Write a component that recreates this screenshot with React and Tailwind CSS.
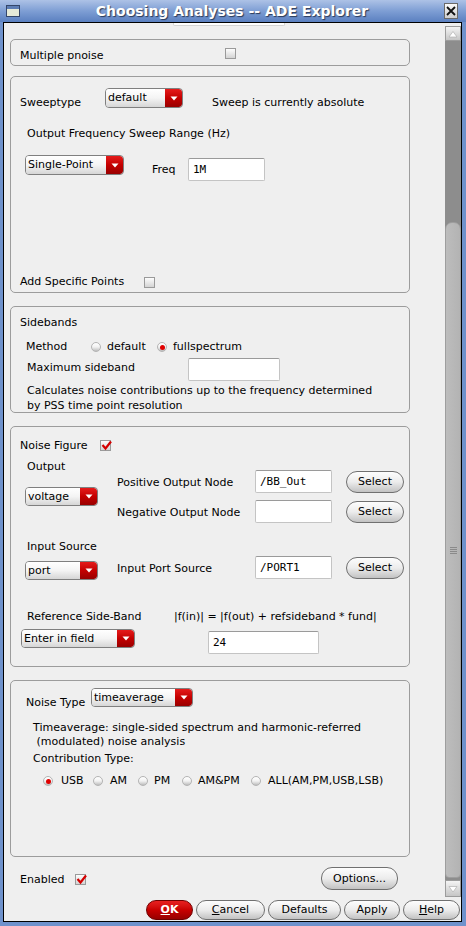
import React from "react"

function Check({ on, className = "" }) {
    return (
        <span className={`relative inline-flex h-[11px] w-[11px] shrink-0 border border-[#9a9a9a] bg-linear-to-b from-[#fdfdfd] to-[#d4d4d4] ${className}`}>
            {on && (
                <svg className="absolute left-[0px] top-[-1px]" width="11" height="11" viewBox="0 0 11 11">
                    <path d="M1.5 5 L4.5 8.5 L10 1.5" stroke="#d40000" strokeWidth="2.2" fill="none" />
                </svg>
            )}
        </span>
    )
}

function Radio({ on }) {
    return (
        <span className="inline-flex h-[10px] w-[10px] shrink-0 items-center justify-center rounded-full border border-[#b4b4b4] bg-linear-to-b from-[#ffffff] via-[#f2f2f2] to-[#bdbdbd]">
            {on && <span className="h-[5px] w-[5px] rounded-full bg-[#e00000]" />}
        </span>
    )
}

function Combo({ w, h, label, className = "" }) {
    return (
        <div className={`flex shrink-0 overflow-hidden rounded-[4px] border border-[#7f7f7f] ${w} ${h} ${className}`}>
            <div className="flex flex-1 items-center bg-linear-to-b from-[#ffffff] via-[#f4f4f4] to-[#d6d6d6] pl-[2px]">{label}</div>
            <div className="flex w-[17px] items-center justify-center rounded-r-[3px] bg-linear-to-b from-[#e51a1a] via-[#c40000] to-[#990000]">
                <svg width="8" height="5" viewBox="0 0 8 5">
                    <path d="M0.5 0.5 L7.5 0.5 L4 4.5 z" fill="#ffffff" />
                </svg>
            </div>
        </div>
    )
}

function Field({ w, value, className = "" }) {
    return (
        <div className={`flex h-[23px] shrink-0 items-center rounded-[2px] border border-[#c4c4c4] border-t-[#9a9a9a] bg-white pl-[4px] font-['DejaVu_Sans_Mono',monospace] ${w} ${className}`}>
            {value}
        </div>
    )
}

function Btn({ w, h = "h-[22px]", children, className = "" }) {
    return (
        <div className={`flex shrink-0 items-center justify-center rounded-[11px] border border-[#707070] bg-linear-to-b from-[#fdfdfd] via-[#ececec] to-[#c2c2c2] ${w} ${h} ${className}`}>
            {children}
        </div>
    )
}

function TitleBar() {
    return (
        <div className="flex h-[22px] items-center bg-linear-to-b from-[#adc2e6] via-[#7e9ed4] to-[#5b80c0]">
            <div className="ml-[6px] flex h-[12px] w-[14px] flex-col border border-[#34466a]">
                <div className="h-[3px] bg-[#5d7db4]" />
                <div className="flex-1 bg-[#e6ead8]" />
            </div>
            <div className="flex-1 text-center text-[14px] font-bold text-white [text-shadow:1px_1px_1px_#2b3a58]">
                Choosing Analyses -- ADE Explorer
            </div>
            <div className="mr-[8px] flex h-[16px] w-[14px] items-center justify-center border border-[#6a6a6a] bg-linear-to-b from-[#fafafa] to-[#cfcfcf]">
                <svg width="10" height="10" viewBox="0 0 10 10">
                    <path d="M1 1 L9 9 M9 1 L1 9" stroke="#111" strokeWidth="1.8" />
                </svg>
            </div>
        </div>
    )
}

function ScrollBar() {
    return (
        <div className="flex w-[16px] flex-col pt-[3px]">
            <div className="flex h-[15px] items-center justify-center border border-[#9c9c9c] bg-linear-to-b from-[#f4f4f4] to-[#c6c6c6]">
                <svg width="10" height="8" viewBox="0 0 10 8">
                    <path d="M1 7 L9 7 L5 1.5 z" fill="#ffffff" stroke="#a8a8a8" strokeWidth="0.6" />
                </svg>
            </div>
            <div className="flex-1 bg-[#8d8d8d] pt-[181px]">
                <div className="flex h-[656px] items-center justify-center rounded-t-[7px] rounded-b-[4px] border border-[#9e9e9e] bg-linear-to-r from-[#bdbdbd] to-[#b3b3b3]">
                    <div className="flex flex-col gap-[1px]">
                        <div className="h-[1px] w-[7px] bg-[#8a8a8a]" />
                        <div className="h-[1px] w-[7px] bg-[#8a8a8a]" />
                        <div className="h-[1px] w-[7px] bg-[#8a8a8a]" />
                        <div className="h-[1px] w-[7px] bg-[#8a8a8a]" />
                    </div>
                </div>
            </div>
            <div className="flex h-[17px] items-center justify-center border border-[#9c9c9c] bg-linear-to-b from-[#f4f4f4] to-[#c6c6c6]">
                <svg width="10" height="8" viewBox="0 0 10 8">
                    <path d="M1 1.5 L9 1.5 L5 7 z" fill="#ffffff" stroke="#a8a8a8" strokeWidth="0.6" />
                </svg>
            </div>
        </div>
    )
}

export default function App() {
    return (
        <div className="flex h-[926px] w-[466px] flex-col bg-[#6f92cc] font-['DejaVu_Sans',sans-serif] text-[11px] leading-[14px] text-black">
            <TitleBar />
            <div className="flex flex-1 pl-[3px] pr-[4px] pb-[4px]">
                <div className="flex flex-1 flex-col border border-black bg-[#efefef]">
                    <div className="flex h-[874px]">
                        <div className="w-[441px]">
                            <div className="ml-[169px] h-[3px] w-[112px] rounded-b-[2px] border border-t-0 border-[#d4d4d4] bg-white" />

                            {/* multiple pnoise */}
                            <div className="ml-[6px] mt-[13px] h-[27px] w-[400px] rounded-[5px] border border-[#9c9c9c] pl-[9px] pt-[8px]">
                                <div className="flex items-start">
                                    <span className="mt-[1px] w-[205px]">Multiple pnoise</span>
                                    <Check />
                                </div>
                            </div>

                            {/* sweep */}
                            <div className="ml-[6px] mt-[10px] h-[217px] w-[400px] rounded-[5px] border border-[#9c9c9c] pl-[9px]">
                                <div className="mt-[11px] flex items-start">
                                    <span className="mt-[8px] w-[85px]">Sweeptype</span>
                                    <Combo w="w-[78px]" h="h-[20px]" label="default" />
                                    <span className="ml-[29px] mt-[8px]">Sweep is currently absolute</span>
                                </div>
                                <div className="ml-[7px] mt-[17px]">Output Frequency Sweep Range (Hz)</div>
                                <div className="mt-[14px] flex items-start">
                                    <Combo w="w-[99px]" h="h-[20px]" label="Single-Point" className="ml-[5px]" />
                                    <span className="ml-[28px] mt-[8px] w-[36px]">Freq</span>
                                    <Field w="w-[77px]" value="1M" className="mt-[3px]" />
                                </div>
                                <div className="mt-[94px] flex h-[14px] items-center">
                                    <span className="w-[124px]">Add Specific Points</span>
                                    <Check />
                                </div>
                            </div>

                            {/* sidebands */}
                            <div className="ml-[6px] mt-[13px] h-[107px] w-[400px] rounded-[5px] border border-[#9c9c9c] pl-[9px]">
                                <div className="mt-[9px]">Sidebands</div>
                                <div className="mt-[10px] flex h-[14px] items-center">
                                    <span className="ml-[6px] w-[65px]">Method</span>
                                    <Radio />
                                    <span className="ml-[6px] w-[50px]">default</span>
                                    <Radio on />
                                    <span className="ml-[6px]">fullspectrum</span>
                                </div>
                                <div className="mt-[4px] flex items-start">
                                    <span className="ml-[7px] mt-[3px] w-[161px]">Maximum sideband</span>
                                    <Field w="w-[92px]" value="" />
                                </div>
                                <div className="ml-[7px] mt-[2px] whitespace-nowrap leading-[15px]">
                                    Calculates noise contributions up to the frequency determined
                                    <br />
                                    by PSS time point resolution
                                </div>
                            </div>

                            {/* noise figure */}
                            <div className="ml-[6px] mt-[13px] h-[241px] w-[400px] rounded-[5px] border border-[#9c9c9c] pl-[9px]">
                                <div className="mt-[11px] flex h-[14px] items-center">
                                    <span className="mt-[1px] w-[80px]">Noise Figure</span>
                                    <Check on />
                                </div>
                                <div className="mt-[8px] flex items-start">
                                    <div className="flex w-[97px] flex-col">
                                        <span className="ml-[7px]">Output</span>
                                        <Combo w="w-[73px]" h="h-[19px]" label="voltage" className="ml-[5px] mt-[13px]" />
                                    </div>
                                    <div className="-mt-[1px] flex flex-col pt-[11px]">
                                        <div className="flex items-start">
                                            <span className="mt-[6px] w-[138px]">Positive Output Node</span>
                                            <Field w="w-[77px]" value="/BB_Out" />
                                            <Btn w="w-[58px]" className="ml-[14px] mt-[1px]">Select</Btn>
                                        </div>
                                        <div className="mt-[7px] flex items-start">
                                            <span className="mt-[6px] w-[138px]">Negative Output Node</span>
                                            <Field w="w-[77px]" value="" />
                                            <Btn w="w-[58px]" className="ml-[14px] mt-[1px]">Select</Btn>
                                        </div>
                                    </div>
                                </div>
                                <div className="mt-[17px] flex items-start">
                                    <div className="flex w-[97px] flex-col">
                                        <span className="ml-[7px]">Input Source</span>
                                        <Combo w="w-[73px]" h="h-[19px]" label="port" className="ml-[5px] mt-[7px]" />
                                    </div>
                                    <div className="flex items-start pt-[16px]">
                                        <span className="mt-[6px] w-[138px]">Input Port Source</span>
                                        <Field w="w-[77px]" value="/PORT1" />
                                        <Btn w="w-[58px]" className="ml-[14px] mt-[1px]">Select</Btn>
                                    </div>
                                </div>
                                <div className="mt-[30px] flex">
                                    <span className="ml-[7px] w-[147px]">Reference Side-Band</span>
                                    <span className="whitespace-pre">|f(in)| = |f(out) + refsideband * fund|</span>
                                </div>
                                <div className="mt-[5px] flex items-start">
                                    <Combo w="w-[114px]" h="h-[19px]" label="Enter in field" className="ml-[1px]" />
                                    <Field w="w-[111px]" value="24" className="ml-[73px] mt-[2px]" />
                                </div>
                            </div>

                            {/* noise type */}
                            <div className="ml-[6px] mt-[13px] h-[177px] w-[400px] rounded-[5px] border border-[#9c9c9c] pl-[9px]">
                                <div className="mt-[7px] flex items-start">
                                    <span className="ml-[6px] mt-[8px] w-[65px]">Noise Type</span>
                                    <Combo w="w-[102px]" h="h-[19px]" label="timeaverage" />
                                </div>
                                <div className="ml-[13px] mt-[11px] whitespace-pre">
                                    Timeaverage: single-sided spectrum and harmonic-referred
                                    <br />
                                    {" (modulated) noise analysis"}
                                </div>
                                <div className="ml-[13px] mt-[3px]">Contribution Type:</div>
                                <div className="mt-[8px] flex h-[14px] items-center">
                                    <span className="ml-[23px]" />
                                    <Radio on />
                                    <span className="ml-[8px] w-[32px]">USB</span>
                                    <Radio />
                                    <span className="ml-[7px] w-[28px]">AM</span>
                                    <Radio />
                                    <span className="ml-[6px] w-[28px]">PM</span>
                                    <Radio />
                                    <span className="ml-[6px] w-[53px]">AM&amp;PM</span>
                                    <Radio />
                                    <span className="ml-[7px]">ALL(AM,PM,USB,LSB)</span>
                                </div>
                            </div>

                            <div className="mt-[10px] flex h-[23px] items-center">
                                <span className="ml-[16px] mt-[3px] w-[55px]">Enabled</span>
                                <Check on className="mt-[2px]" />
                                <Btn w="w-[77px]" h="h-[23px]" className="ml-[235px]">Options...</Btn>
                            </div>
                        </div>
                        <ScrollBar />
                    </div>

                    <div className="flex h-[24px] items-start justify-end gap-[3px] pr-[1px] pt-[3px]">
                        <div className="flex h-[20px] w-[47px] items-center justify-center rounded-[10px] border border-[#6e0000] bg-linear-to-b from-[#e82020] via-[#c80000] to-[#980000] font-bold text-white">
                            <span><span className="underline">O</span>K</span>
                        </div>
                        <Btn w="w-[69px]" h="h-[20px]"><span><span className="underline">C</span>ancel</span></Btn>
                        <Btn w="w-[73px]" h="h-[20px]">Defaults</Btn>
                        <Btn w="w-[56px]" h="h-[20px]">Apply</Btn>
                        <Btn w="w-[57px]" h="h-[20px]"><span><span className="underline">H</span>elp</span></Btn>
                    </div>
                </div>
            </div>
        </div>
    )
}
